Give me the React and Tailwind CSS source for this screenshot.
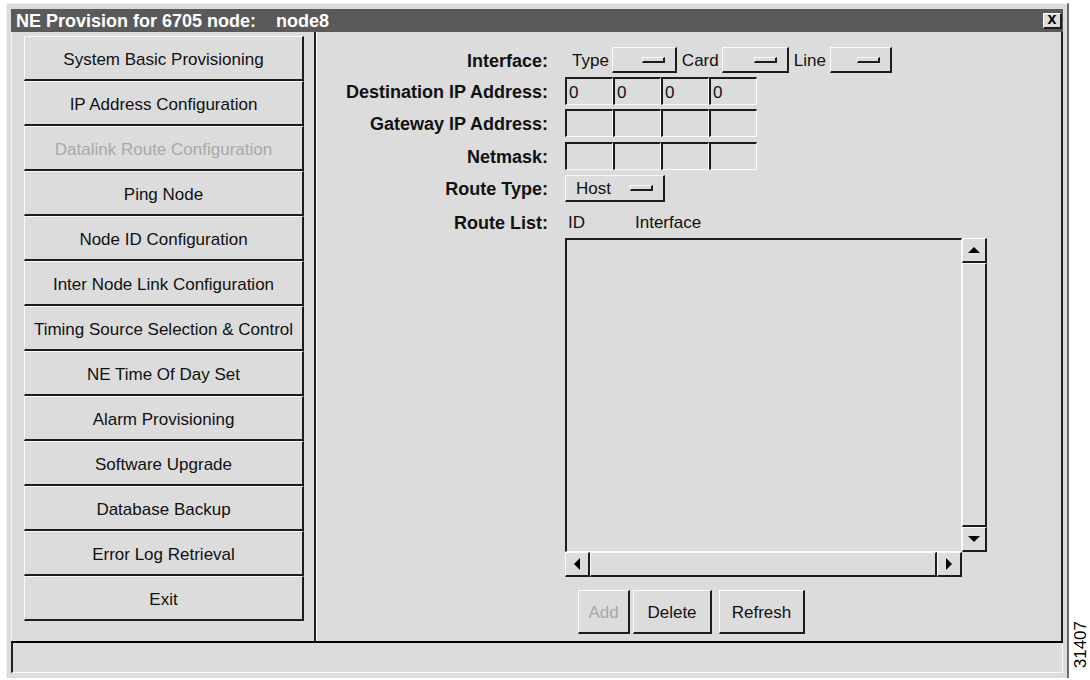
import React from 'react';

// Motif-style bevels: light edge top/left, dark edge bottom/right (or reversed when sunken)
const raised =
  'border-t border-l border-b-2 border-r-2 border-t-[#fafafa] border-l-[#fafafa] border-b-[#1c1c1c] border-r-[#1c1c1c]';
const sunken =
  'border-t-2 border-l-2 border-b border-r border-t-[#1c1c1c] border-l-[#1c1c1c] border-b-[#fafafa] border-r-[#fafafa]';

const menuItems = [
  { label: 'System Basic Provisioning' },
  { label: 'IP Address Configuration' },
  { label: 'Datalink Route Configuration', disabled: true },
  { label: 'Ping Node' },
  { label: 'Node ID Configuration' },
  { label: 'Inter Node Link Configuration' },
  { label: 'Timing Source Selection & Control' },
  { label: 'NE Time Of Day Set' },
  { label: 'Alarm Provisioning' },
  { label: 'Software Upgrade' },
  { label: 'Database Backup' },
  { label: 'Error Log Retrieval' },
  { label: 'Exit' },
];

const Indicator = ({ className = '' }) => (
  <span className={`block w-[23px] h-[6px] ${raised} ${className}`} />
);

const OptionMenu = ({ label, className = '' }) => (
  <div className={`flex items-center h-full bg-[#dcdcdc] ${raised} ${className}`}>
    {label && <span className="ml-[10px] pt-[2px]">{label}</span>}
    <Indicator className="ml-auto mr-[10px]" />
  </div>
);

const IpField = ({ value = '' }) => (
  <div className={`w-[48px] h-full flex items-center pl-[2px] pt-[2px] ${sunken}`}>{value}</div>
);

const FormRow = ({ label, className = '', children }) => (
  <div className={`flex items-center ${className}`}>
    <div className="w-[231px] shrink-0 text-right font-bold text-[18px] text-[#111] pt-[2px]">{label}</div>
    <div className="ml-[17px] flex items-center h-full">{children}</div>
  </div>
);

const Arrow = ({ dir }) => {
  const pts = {
    up: '0,6 6,0 12,6',
    down: '0,0 12,0 6,6',
    left: '6,0 6,12 0,6',
    right: '0,0 0,12 6,6',
  }[dir];
  const vertical = dir === 'up' || dir === 'down';
  return (
    <svg width={vertical ? 12 : 6} height={vertical ? 6 : 12} viewBox={vertical ? '0 0 12 6' : '0 0 6 12'}>
      <polygon points={pts} fill="#000" />
    </svg>
  );
};

const PushButton = ({ children, disabled, className = '' }) => (
  <div
    className={`h-[44px] flex items-center justify-center pt-[2px] ${raised} ${className} ${
      disabled ? 'text-[#a9a9a9]' : 'text-[#111]'
    }`}
  >
    {children}
  </div>
);

export default function App() {
  return (
    <div className="w-[1090px] h-[680px] bg-white flex pt-[3px] pl-[6px] overflow-hidden font-['Liberation_Sans',Arial,sans-serif] text-[17px] text-[#111]">
      <div className="w-[1063px] h-[675px] shrink-0 bg-[#dcdcdc] border-t border-l border-t-[#f2f2f2] border-l-[#f2f2f2] border-r-2 border-r-[#6a6a6a] pt-[5px] pl-[4px] pr-[4px] flex flex-col">
        {/* title bar */}
        <div className="h-[23px] shrink-0 bg-[#5a5a5a] flex items-center pl-[5px] text-white font-bold text-[18px] whitespace-pre">
          <span className="pt-[2px]">NE Provision for 6705 node:    node8</span>
          <div className={`ml-auto mr-[1px] w-[19px] h-[16px] bg-[#dcdcdc] flex items-center justify-center text-black font-bold text-[16px] leading-none ${raised}`}>
            <span className="-mt-[3px]">x</span>
          </div>
        </div>

        {/* body */}
        <div className="h-[611px] shrink-0 flex border-b-2 border-b-black">
          {/* function list */}
          <div className="w-[305px] shrink-0 border-l border-l-[#f4f4f4] border-r-2 border-r-[#222] pl-[12px] pt-[4px]">
            {menuItems.map((item) => (
              <div
                key={item.label}
                className={`w-[280px] h-[45px] flex items-center justify-center pt-[4px] ${raised} ${
                  item.disabled ? 'text-[#a9a9a9]' : 'text-[#111]'
                }`}
              >
                {item.label}
              </div>
            ))}
          </div>

          {/* route form */}
          <div className="flex-1 border-l border-l-[#f4f4f4] border-r-2 border-r-[#222] pt-[15px]">
            <FormRow label="Interface:" className="h-[26px]">
              <span className="ml-[7px] pt-[2px]">Type</span>
              <OptionMenu className="ml-[3px] w-[65px]" />
              <span className="ml-[5px] pt-[2px]">Card</span>
              <OptionMenu className="ml-[3px] w-[67px]" />
              <span className="ml-[5px] pt-[2px]">Line</span>
              <OptionMenu className="ml-[4px] w-[62px]" />
            </FormRow>

            <FormRow label="Destination IP Address:" className="h-[28px] mt-[4px]">
              <IpField value="0" />
              <IpField value="0" />
              <IpField value="0" />
              <IpField value="0" />
            </FormRow>

            <FormRow label="Gateway IP Address:" className="h-[28px] mt-[4px]">
              <IpField />
              <IpField />
              <IpField />
              <IpField />
            </FormRow>

            <FormRow label="Netmask:" className="h-[28px] mt-[5px]">
              <IpField />
              <IpField />
              <IpField />
              <IpField />
            </FormRow>

            <FormRow label="Route Type:" className="h-[27px] mt-[5px]">
              <OptionMenu label="Host" className="w-[100px]" />
            </FormRow>

            <FormRow label="Route List:" className="h-[24px] mt-[8px]">
              <span className="ml-[3px] pt-[2px]">ID</span>
              <span className="ml-[50px] pt-[2px]">Interface</span>
            </FormRow>

            <div className="flex mt-[4px]">
              <div className="w-[231px] shrink-0" />
              <div className="ml-[17px]">
                <div className="flex">
                  <div className={`w-[397px] h-[314px] ${sunken}`} />
                  <div className="w-[25px] h-[314px] flex flex-col">
                    <div className={`h-[25px] flex items-center justify-center ${raised}`}>
                      <Arrow dir="up" />
                    </div>
                    <div className={`flex-1 ${raised}`} />
                    <div className={`h-[25px] flex items-center justify-center ${raised}`}>
                      <Arrow dir="down" />
                    </div>
                  </div>
                </div>
                <div className="w-[397px] h-[25px] flex">
                  <div className={`w-[25px] flex items-center justify-center ${raised}`}>
                    <Arrow dir="left" />
                  </div>
                  <div className={`flex-1 ${raised}`} />
                  <div className={`w-[25px] flex items-center justify-center ${raised}`}>
                    <Arrow dir="right" />
                  </div>
                </div>

                <div className="flex mt-[13px] ml-[13px]">
                  <PushButton disabled className="w-[52px]">Add</PushButton>
                  <PushButton className="ml-[3px] w-[79px]">Delete</PushButton>
                  <PushButton className="ml-[7px] w-[86px]">Refresh</PushButton>
                </div>
              </div>
            </div>
          </div>
        </div>

        {/* status line */}
        <div className="h-[30px] shrink-0 border-l-2 border-l-[#222] border-b border-r border-b-[#fafafa] border-r-[#fafafa]" />
      </div>

      <div className="flex-1 flex flex-col justify-end items-center pb-[12px] pl-[2px]">
        <span className="[writing-mode:vertical-rl] rotate-180 text-[17px] leading-none text-black">31407</span>
      </div>
    </div>
  );
}
